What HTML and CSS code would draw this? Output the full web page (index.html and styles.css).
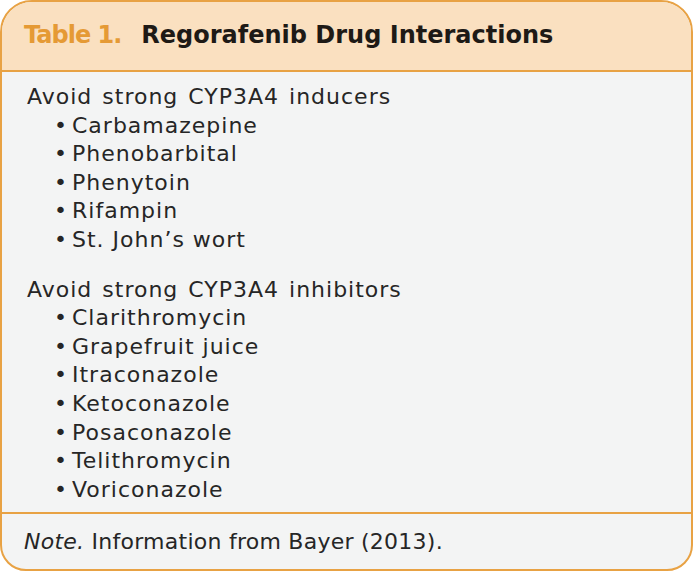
FILE: index.html
```html
<!DOCTYPE html>
<html>
<head>
<meta charset="utf-8">
<link rel="stylesheet" href="styles.css">
</head>
<body>
<div class="card">
  <div class="card-header">
    <span class="label">Table 1.</span><span class="title">Regorafenib Drug Interactions</span>
  </div>
  <div class="card-body">
    <div class="group">
      <div class="heading">Avoid strong CYP3A4 inducers</div>
      <ul class="list">
        <li>Carbamazepine</li>
        <li>Phenobarbital</li>
        <li>Phenytoin</li>
        <li>Rifampin</li>
        <li>St. John’s wort</li>
      </ul>
    </div>
    <div class="group">
      <div class="heading">Avoid strong CYP3A4 inhibitors</div>
      <ul class="list">
        <li>Clarithromycin</li>
        <li>Grapefruit juice</li>
        <li>Itraconazole</li>
        <li>Ketoconazole</li>
        <li>Posaconazole</li>
        <li>Telithromycin</li>
        <li>Voriconazole</li>
      </ul>
    </div>
  </div>
  <div class="card-footer"><em>Note.</em> Information from Bayer (2013).</div>
</div>
</body>
</html>
```
FILE: styles.css
```css
html, body {
  margin: 0;
  padding: 0;
  background: #ffffff;
}
.card {
  box-sizing: border-box;
  width: 693px;
  height: 571px;
  border: 2px solid #e8a244;
  border-radius: 32px 32px 26px 26px;
  background: #f3f4f4;
  overflow: hidden;
  font-family: "DejaVu Sans", "Open Sans", sans-serif;
  color: #262626;
  display: flex;
  flex-direction: column;
}
.card-header {
  box-sizing: border-box;
  height: 70px;
  background: #fae0c0;
  border-bottom: 2px solid #e8a244;
  padding: 15px 0 0 22px;
  font-size: 24px;
  font-weight: 700;
  line-height: 36px;
}
.label {
  color: #e59a35;
  margin-right: 20px;
  letter-spacing: -1px;
}
.title {
  color: #1e1a16;
}
.card-body {
  box-sizing: border-box;
  height: 442px;
  padding: 11px 0 0 25px;
  font-size: 22px;
  line-height: 28.6px;
  letter-spacing: 1px;
  border-bottom: 2px solid #e8a244;
  display: flex;
  flex-direction: column;
  gap: 21px;
}
.heading {
  word-spacing: 2px;
}
.list {
  list-style: none;
  margin: 0;
  padding: 0 0 0 27px;
}
.list li {
  display: flex;
}
.list li::before {
  content: "•";
  flex: 0 0 18px;
  letter-spacing: 0;
}
.card-footer {
  padding: 13px 0 0 22px;
  font-size: 22px;
  line-height: 30px;
  letter-spacing: 0.25px;
}
.card-footer em {
  font-style: italic;
}
```
